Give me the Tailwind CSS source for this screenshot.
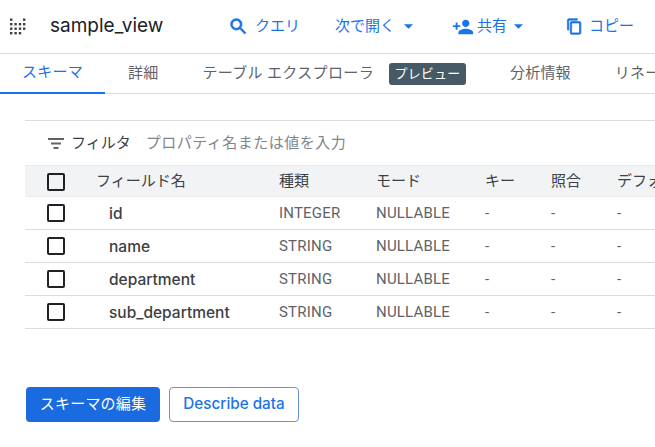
<!DOCTYPE html>
<html lang="ja">
<head>
<meta charset="UTF-8">
<title>sample_view</title>
<script src="https://cdn.jsdelivr.net/npm/@tailwindcss/browser@4"></script>
</head>
<body class="w-[655px] h-[447px] overflow-hidden bg-white text-[#3c4043] font-['Roboto','Noto_Sans_CJK_JP',sans-serif]">
  <!-- header -->
  <header class="h-[54px] flex items-center border-b border-[#dadce0] whitespace-nowrap">
    <svg class="ml-[10px] w-[16px] h-[17px] shrink-0 text-[#3c4043]" viewBox="0 0 16 17" fill="currentColor">
      <rect x="0" y="0.5" width="2.4" height="2.4"/><rect x="13" y="0.5" width="2.4" height="2.4"/>
      <rect x="0" y="5" width="2.4" height="2.4"/><rect x="4.4" y="5" width="2.4" height="2.4"/><rect x="8.8" y="5" width="2.4" height="2.4"/><rect x="13" y="5" width="2.4" height="2.4"/>
      <rect x="0" y="9.5" width="2.4" height="2.4"/><rect x="4.4" y="9.5" width="2.4" height="2.4"/><rect x="8.8" y="9.5" width="2.4" height="2.4"/><rect x="13" y="9.5" width="2.4" height="2.4"/>
      <rect x="0" y="14" width="2.4" height="2.4"/><rect x="4.4" y="14" width="2.4" height="2.4"/><rect x="8.8" y="14" width="2.4" height="2.4"/>
    </svg>
    <h1 class="ml-[24px] w-[178px] shrink-0 text-[19px] font-normal text-[#202124] font-['Inter','Noto_Sans_CJK_JP',sans-serif]">sample_view</h1>
    <div class="flex items-center text-[15px] text-[#1a73e8]">
      <svg class="w-[21px] h-[21px] shrink-0" viewBox="0 0 24 24" fill="currentColor" stroke="currentColor" stroke-width="0.9"><path d="M15.5 14h-.79l-.28-.27A6.47 6.47 0 0 0 16 9.5 6.5 6.5 0 1 0 9.5 16c1.61 0 3.09-.59 4.23-1.57l.27.28v.79l5 4.99L20.49 19l-4.99-5zm-6 0C7.01 14 5 11.99 5 9.5S7.01 5 9.5 5 14 7.01 14 9.5 11.99 14 9.5 14z"/></svg>
      <span class="ml-[6px] w-[80px] shrink-0">クエリ</span>
      <span class="shrink-0">次で開く</span>
      <svg class="ml-[9px] w-[9px] h-[5px] shrink-0" viewBox="0 0 10 5" fill="currentColor"><path d="M0 0h10L5 5z"/></svg>
      <svg class="ml-[39px] w-[22px] h-[22px] shrink-0" viewBox="0 0 24 24" fill="currentColor"><path d="M15 12c2.21 0 4-1.79 4-4s-1.79-4-4-4-4 1.79-4 4 1.79 4 4 4zm-9-2V7H4v3H1v2h3v3h2v-3h3v-2H6zm9 4c-2.67 0-8 1.34-8 4v2h16v-2c0-2.66-5.33-4-8-4z"/></svg>
      <span class="ml-[3px] shrink-0">共有</span>
      <svg class="ml-[7px] w-[9px] h-[5px] shrink-0" viewBox="0 0 10 5" fill="currentColor"><path d="M0 0h10L5 5z"/></svg>
      <svg class="ml-[43px] w-[17px] h-[17px] shrink-0" viewBox="0 0 24 24" fill="currentColor" stroke="currentColor" stroke-width="1"><path d="M16 1H4c-1.1 0-2 .9-2 2v14h2V3h12V1zm3 4H8c-1.1 0-2 .9-2 2v14c0 1.1.9 2 2 2h11c1.1 0 2-.9 2-2V7c0-1.1-.9-2-2-2zm0 16H8V7h11v14z"/></svg>
      <span class="ml-[6px] shrink-0">コピー</span>
    </div>
  </header>
  <!-- tabs -->
  <nav class="h-[40px] flex items-center border-b border-[#dadce0] text-[15px] tracking-[0.2px] text-[#5f6368] whitespace-nowrap">
    <div class="w-[105px] h-[40px] shrink-0 flex items-center justify-center text-[#1a73e8] border-b-2 border-[#1a73e8]">スキーマ</div>
    <span class="ml-[23px] shrink-0">詳細</span>
    <span class="ml-[44px] shrink-0 tracking-[0.35px]">テーブル エクスプローラ</span>
    <span class="ml-[15px] h-[22px] w-[77px] shrink-0 flex items-center justify-center rounded-[3px] bg-[#455a64] text-white text-[13px]">プレビュー</span>
    <span class="ml-[44px] shrink-0">分析情報</span>
    <span class="ml-[44px] shrink-0">リネージ</span>
  </nav>
  <!-- schema table -->
  <section class="ml-[25px] mt-[26px] border-t border-[#dadce0] whitespace-nowrap">
    <div class="h-[44px] flex items-center pl-[23px] text-[15px]">
      <svg class="w-[16px] h-[16px] shrink-0 text-[#5f6368]" viewBox="0 0 16 16" fill="currentColor"><rect x="0" y="3" width="16" height="2"/><rect x="3" y="7.5" width="10" height="2"/><rect x="5.5" y="12" width="5" height="2"/></svg>
      <span class="ml-[7px] shrink-0 text-[#3c4043]">フィルタ</span>
      <span class="ml-[15px] shrink-0 tracking-[0.5px] text-[#80868b]">プロパティ名または値を入力</span>
    </div>
    <div class="h-[32px] flex items-center bg-[#f1f3f4] border-t border-b border-[#e8eaed] text-[15px] text-[#3c4043]">
      <span class="ml-[22px] mt-[2px] w-[18px] h-[18px] shrink-0 border-2 border-[#202124] rounded-[2px]"></span>
      <span class="ml-[31px] w-[183px] shrink-0">フィールド名</span>
      <span class="w-[97px] shrink-0">種類</span>
      <span class="w-[109px] shrink-0">モード</span>
      <span class="w-[66px] shrink-0">キー</span>
      <span class="w-[66px] shrink-0">照合</span>
      <span class="shrink-0">デフォルト</span>
    </div>
    <div class="h-[33px] flex items-center border-b border-[#dadce0] text-[15px] tracking-[0.2px] text-[#5f6368]">
      <span class="ml-[22px] w-[18px] h-[18px] shrink-0 border-2 border-[#202124] rounded-[2px]"></span>
      <span class="ml-[44px] mt-[2px] w-[170px] shrink-0 text-[15.5px] tracking-normal font-medium text-[#3c4043] font-['Inter',sans-serif]">id</span>
      <span class="w-[97px] shrink-0">INTEGER</span><span class="w-[109px] shrink-0">NULLABLE</span><span class="w-[66px] shrink-0">-</span><span class="w-[66px] shrink-0">-</span><span class="shrink-0">-</span>
    </div>
    <div class="h-[33px] flex items-center border-b border-[#dadce0] text-[15px] tracking-[0.2px] text-[#5f6368]">
      <span class="ml-[22px] w-[18px] h-[18px] shrink-0 border-2 border-[#202124] rounded-[2px]"></span>
      <span class="ml-[44px] mt-[2px] w-[170px] shrink-0 text-[15.5px] tracking-normal font-medium text-[#3c4043] font-['Inter',sans-serif]">name</span>
      <span class="w-[97px] shrink-0">STRING</span><span class="w-[109px] shrink-0">NULLABLE</span><span class="w-[66px] shrink-0">-</span><span class="w-[66px] shrink-0">-</span><span class="shrink-0">-</span>
    </div>
    <div class="h-[33px] flex items-center border-b border-[#dadce0] text-[15px] tracking-[0.2px] text-[#5f6368]">
      <span class="ml-[22px] w-[18px] h-[18px] shrink-0 border-2 border-[#202124] rounded-[2px]"></span>
      <span class="ml-[44px] mt-[2px] w-[170px] shrink-0 text-[15.5px] tracking-normal font-medium text-[#3c4043] font-['Inter',sans-serif]">department</span>
      <span class="w-[97px] shrink-0">STRING</span><span class="w-[109px] shrink-0">NULLABLE</span><span class="w-[66px] shrink-0">-</span><span class="w-[66px] shrink-0">-</span><span class="shrink-0">-</span>
    </div>
    <div class="h-[33px] flex items-center border-b border-[#dadce0] text-[15px] tracking-[0.2px] text-[#5f6368]">
      <span class="ml-[22px] w-[18px] h-[18px] shrink-0 border-2 border-[#202124] rounded-[2px]"></span>
      <span class="ml-[44px] mt-[2px] w-[170px] shrink-0 text-[15.5px] tracking-normal font-medium text-[#3c4043] font-['Inter',sans-serif]">sub_department</span>
      <span class="w-[97px] shrink-0">STRING</span><span class="w-[109px] shrink-0">NULLABLE</span><span class="w-[66px] shrink-0">-</span><span class="w-[66px] shrink-0">-</span><span class="shrink-0">-</span>
    </div>
  </section>
  <!-- actions -->
  <div class="ml-[26px] mt-[58px] flex gap-[9px] text-[15px]">
    <button class="w-[134px] h-[35px] rounded-[4px] bg-[#1a6ae0] text-white tracking-[0.2px]">スキーマの編集</button>
    <button class="w-[130px] h-[35px] rounded-[4px] bg-white border border-[#6a93d6] text-[#1a73e8] text-[15.25px] font-medium font-['Inter',sans-serif]">Describe data</button>
  </div>
</body>
</html>
